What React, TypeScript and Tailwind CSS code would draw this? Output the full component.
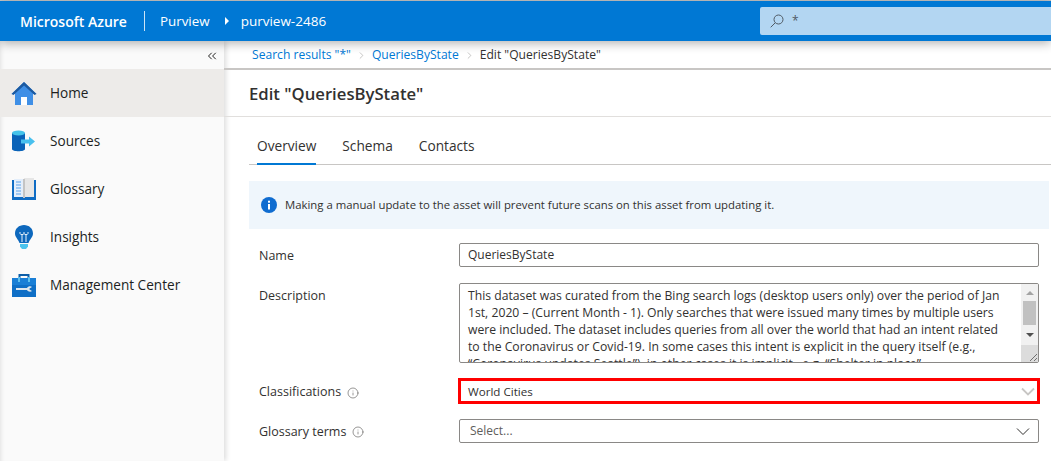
import { ChevronRight, ChevronsLeft, Info } from "lucide-react";

const font = "font-['Open_Sans','Noto_Sans',sans-serif]";

function HomeIcon() {
  return (
    <svg width="26" height="25" viewBox="0 0 26 25">
      <path d="M13 1 L25.5 13 L22 13 L22 24 L4 24 L4 13 L0.5 13 Z" fill="#3f8fe6" />
      <path d="M13 1 L25.5 13 L23.5 14 L13 4.5 L2.5 14 L0.5 13 Z" fill="#1d5aa0" />
      <rect x="10" y="16" width="6" height="8" fill="#fff" />
    </svg>
  );
}

function SourcesIcon() {
  return (
    <svg width="24" height="23" viewBox="0 0 24 23">
      <path d="M0 3 V19 C0 22 13 22 13 19 V3 Z" fill="#0a63b8" />
      <ellipse cx="6.5" cy="3" rx="6.5" ry="2.6" fill="#45c3ea" />
      <path d="M9 9.5 H17 V6.5 L23 11.5 L17 16.5 V13.5 H9 Z" fill="#48c0ee" />
    </svg>
  );
}

function GlossaryIcon() {
  return (
    <svg width="24" height="22" viewBox="0 0 24 22">
      <rect x="0" y="2" width="24" height="20" fill="#0f6cc4" />
      <rect x="2" y="1" width="10" height="18" fill="#e3eefb" />
      <rect x="12" y="0" width="10" height="19" fill="#e6e6e6" />
      <rect x="11" y="1" width="2" height="19" fill="#c4c4c4" />
      <path d="M4 4 H9 M4 7 H9 M4 10 H9 M4 13 H9 M4 16 H9" stroke="#5ba2ea" strokeWidth="1" />
    </svg>
  );
}

function InsightsIcon() {
  return (
    <svg width="18" height="24" viewBox="0 0 18 24">
      <path d="M9 0 C4 0 0 3.5 0 8.5 C0 12 3 14 4.5 18 H13.5 C15 14 18 12 18 8.5 C18 3.5 14 0 9 0 Z" fill="#0d68bd" />
      <path d="M5 19 H13 V21.5 L11 24 H7 L5 21.5 Z" fill="#4bc3ee" />
      <path d="M7 17 V10 M11 17 V10 M5 7 V8.5 C5 10 9 10 9 8.5 V7 M9 8.5 C9 10 13 10 13 8.5 V7" stroke="#e8f3fc" strokeWidth="1" fill="none" />
    </svg>
  );
}

function ManagementIcon() {
  return (
    <svg width="24" height="24" viewBox="0 0 24 24">
      <path d="M6.5 6 V1 H17.5 V6 H15.5 V3 H8.5 V6 Z" fill="#0d5ea8" />
      <rect x="0" y="5" width="24" height="19" fill="#0f6fc6" />
      <rect x="0" y="5" width="24" height="7" fill="#1a7fd6" />
      <rect x="6" y="4" width="2" height="5" fill="#5fc0ee" />
      <rect x="16" y="4" width="2" height="5" fill="#5fc0ee" />
      <path d="M4 15 H15 C16 13 19 13 20 14 L17.5 15.5 V16.5 L20 18 C19 19 16 19 15 17 H4 Z" fill="#dfe6ec" />
    </svg>
  );
}

function DownChevron({ className, weight }: { className: string; weight: number }) {
  return (
    <svg width="14" height="9" viewBox="0 0 14 9" fill="none" stroke="currentColor" strokeWidth={weight} className={className}>
      <path d="M1 1.5 L7 7.5 L13 1.5" />
    </svg>
  );
}

const navItems = [
  { label: "Home", icon: <HomeIcon />, active: true },
  { label: "Sources", icon: <SourcesIcon /> },
  { label: "Glossary", icon: <GlossaryIcon /> },
  { label: "Insights", icon: <InsightsIcon /> },
  { label: "Management Center", icon: <ManagementIcon /> },
];

function Sidebar() {
  return (
    <aside className="flex w-[224px] shrink-0 flex-col bg-[#fafafa] shadow-[inset_4px_0_4px_-3px_rgba(0,0,0,0.1),2px_0_5px_rgba(0,0,0,0.14)]">
      <div className="flex h-[28px] items-center justify-end pr-[5px] pt-[1px] text-[#201f1e]">
        <ChevronsLeft size={14} strokeWidth={1.7} />
      </div>
      {navItems.map((item) => (
        <div
          key={item.label}
          className={`flex h-[48px] items-center ${item.active ? "bg-[#edebe9]" : ""}`}
        >
          <span className="flex w-[50px] shrink-0 justify-center pr-[2px]">{item.icon}</span>
          <span className="pt-[1px] text-[13.6px] font-medium text-[#201f1e]">{item.label}</span>
        </div>
      ))}
    </aside>
  );
}

function Label({ text, info, strong }: { text: string; info?: boolean; strong?: boolean }) {
  return (
    <div className={`flex w-[200px] shrink-0 items-center gap-[6px] text-[12.5px] text-[#323130] ${strong ? "font-medium" : ""}`}>
      {text}
      {info && <Info size={12} strokeWidth={1.3} className="text-[#605e5c]" />}
    </div>
  );
}

function DescriptionBox() {
  return (
    <div className="flex h-[80px] flex-1 overflow-hidden rounded-[2px] border border-[#8a8886]">
      <p className="flex-1 overflow-hidden whitespace-nowrap pl-[8px] pt-[3px] text-[12.2px] leading-[17px] text-[#323130]">
        This dataset was curated from the Bing search logs (desktop users only) over the period of Jan
        <br />
        1st, 2020 – (Current Month - 1). Only searches that were issued many times by multiple users
        <br />
        were included. The dataset includes queries from all over the world that had an intent related
        <br />
        to the Coronavirus or Covid-19. In some cases this intent is explicit in the query itself (e.g.,
        <br />
        “Coronavirus updates Seattle”), in other cases it is implicit , e.g. “Shelter in place”
      </p>
      <div className="flex w-[17px] shrink-0 flex-col bg-[#f1f1f1]">
        <div className="flex h-[17px] items-center justify-center">
          <div className="h-0 w-0 border-x-[4px] border-b-[4px] border-x-transparent border-b-[#a3a3a3]" />
        </div>
        <div className="mx-[2px] h-[24px] bg-[#c1c1c1]" />
        <div className="flex h-[20px] items-center justify-center">
          <div className="h-0 w-0 border-x-[4px] border-t-[4px] border-x-transparent border-t-[#505050]" />
        </div>
        <div className="flex flex-1 items-end justify-end bg-[#dcdcdc]">
          <svg width="10" height="10" viewBox="0 0 10 10">
            <path d="M2 9 L9 2 M6 9 L9 6" stroke="#707070" strokeWidth="1" />
          </svg>
        </div>
      </div>
    </div>
  );
}

export default function App() {
  return (
    <div className={`flex h-[461px] w-[1051px] flex-col overflow-hidden bg-white ${font}`}>
      <div className="h-[1px] shrink-0 bg-[#c8c8c8]" />
      <header className="relative z-10 flex h-[40px] shrink-0 items-center bg-[#0078d4] pl-[20px] text-white shadow-[0_2px_10px_rgba(0,0,0,0.32)]">
        <span className="text-[14px] font-semibold">Microsoft Azure</span>
        <div className="ml-[17px] h-[20px] w-[1px] bg-white/80" />
        <span className="ml-[15px] text-[13.4px]">Purview</span>
        <div className="ml-[15px] h-0 w-0 border-y-[4px] border-l-[4px] border-y-transparent border-l-white" />
        <span className="ml-[12px] text-[13.5px]">purview-2486</span>
        <div className="ml-auto flex h-[28px] w-[291px] items-center rounded-l-[2px] bg-[#b3d6f2] pl-[10px]">
          <svg width="14" height="14" viewBox="0 0 14 14" fill="none" stroke="#505a64" strokeWidth="1">
            <circle cx="8.5" cy="5.5" r="4.5" />
            <path d="M5.2 8.8 L0.7 13.3" />
          </svg>
          <span className="ml-[8px] text-[12px] text-[#505a64]">*</span>
        </div>
      </header>

      <div className="flex min-h-0 flex-1">
        <Sidebar />
        <main className="flex min-w-0 flex-1 flex-col">
          <nav className="flex h-[29px] shrink-0 items-center gap-[5px] border-b-2 border-[#c8c6c4] pl-[28px] pt-[2px] text-[12.1px] text-[#a19f9d]">
            <span className="text-[#0078d4]">Search results "*"</span>
            <ChevronRight size={11} strokeWidth={1.3} />
            <span className="text-[#0078d4]">QueriesByState</span>
            <ChevronRight size={11} strokeWidth={1.3} />
            <span className="text-[#323130]">Edit "QueriesByState"</span>
          </nav>
          <div className="flex h-[47px] shrink-0 items-center border-b border-[#e1dfdd] pl-[25px] pt-[1px]">
            <h1 className="text-[16.7px] font-semibold text-[#323130]">Edit "QueriesByState"</h1>
          </div>

          <div className="flex flex-1 flex-col pl-[25px]">
            <div className="mt-[13px] flex h-[35px] items-stretch gap-[26px] border-b border-[#c8c6c4] pb-[2px] pl-[8px] text-[13.7px] text-[#323130]">
              <span className="-mb-[3px] flex items-center border-b-2 border-[#0078d4] font-medium">Overview</span>
              <span className="flex items-center">Schema</span>
              <span className="flex items-center">Contacts</span>
            </div>

            <div className="mr-[2px] mt-[16px] flex h-[48px] items-center gap-[8px] bg-[#eff6fc] pl-[12px] text-[11.35px] text-[#323130]">
              <svg width="16" height="16" viewBox="0 0 16 16">
                <circle cx="8" cy="8" r="8" fill="#0f6cd0" />
                <rect x="7" y="7" width="2" height="5.5" fill="#fff" />
                <rect x="7" y="3.7" width="2" height="2" fill="#fff" />
              </svg>
              Making a manual update to the asset will prevent future scans on this asset from updating it.
            </div>

            <div className="mr-[12px] mt-[14px] flex h-[24px] items-center pl-[10px]">
              <div className="pt-[3px]">
                <Label text="Name" strong />
              </div>
              <div className="flex h-[24px] flex-1 items-center rounded-[2px] border border-[#8a8886] pl-[8px] text-[12px] text-[#323130]">
                QueriesByState
              </div>
            </div>

            <div className="mr-[12px] mt-[16px] flex items-start pl-[10px]">
              <div className="pt-[4px]">
                <Label text="Description" strong />
              </div>
              <DescriptionBox />
            </div>

            <div className="mr-[12px] mt-[15px] flex h-[26px] items-center pl-[10px]">
              <div className="pt-[3px]">
                <Label text="Classifications" info />
              </div>
              <div className="-ml-[1px] -mr-[1px] flex h-[26px] flex-1 items-center justify-between border-[3px] border-[#ff0000] pl-[7px] pr-[2px] text-[11.6px] text-[#323130]">
                <span className="pt-[1px]">World Cities</span>
                <DownChevron className="text-[#c8c6c4]" weight={1.8} />
              </div>
            </div>

            <div className="mr-[12px] mt-[15px] flex h-[24px] items-center pl-[10px]">
              <div className="pt-[2px]">
                <Label text="Glossary terms" info />
              </div>
              <div className="flex h-[24px] flex-1 items-center justify-between rounded-[2px] border border-[#8a8886] pl-[10px] pr-[8px] text-[12px] text-[#605e5c]">
                Select...
                <DownChevron className="text-[#323130]" weight={1} />
              </div>
            </div>
          </div>
        </main>
      </div>
    </div>
  );
}
